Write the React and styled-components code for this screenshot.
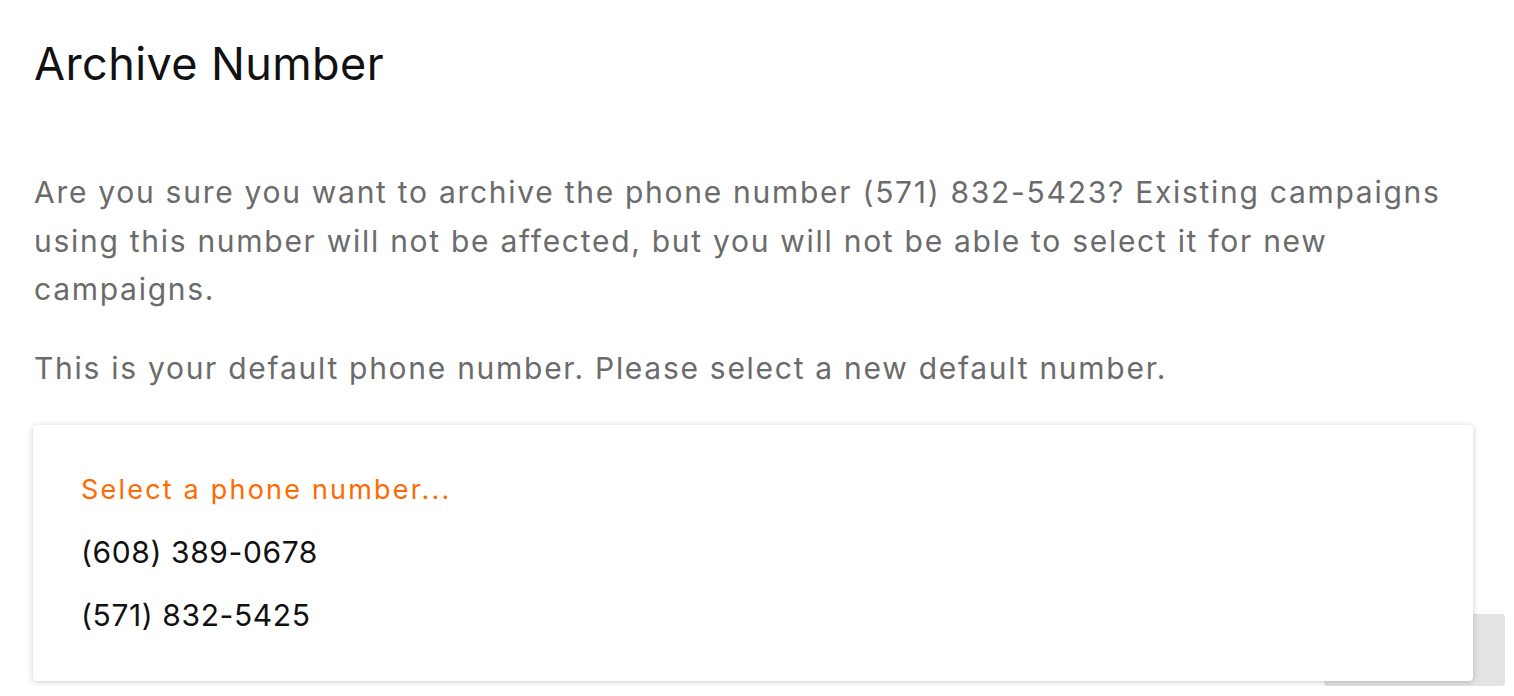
import React from 'react';
import styled, { createGlobalStyle } from 'styled-components';

const GlobalStyle = createGlobalStyle`
  html, body { margin: 0; padding: 0; background: #ffffff; }
  body { font-family: Inter, "Open Sans", sans-serif; }
`;

const Page = styled.div`
  padding: 37px 9px 0 34px;
  box-sizing: border-box;
  width: 1514px;
`;

const Title = styled.h2`
  margin: 0;
  max-width: 1440px;
  font-family: Inter, sans-serif;
  font-weight: 400;
  font-size: 45px;
  line-height: 54px;
  letter-spacing: 0.4px;
  color: #111111;
`;

const Text = styled.p`
  margin: ${p => p.$top}px 0 0;
  max-width: 1440px;
  font-family: Inter, sans-serif;
  font-size: 30px;
  line-height: 48.5px;
  letter-spacing: 1.72px;
  color: #6b6b6b;
`;

const Field = styled.div`
  position: relative;
  margin-top: 32.7px;
  max-width: 1440px;
  height: 56px;
`;

const Menu = styled.ul`
  position: absolute;
  z-index: 2;
  top: 0;
  left: -1px;
  width: 1440px;
  box-sizing: border-box;
  margin: 0;
  padding: 33px 48px 34px;
  list-style: none;
  background: #ffffff;
  border-radius: 4px;
  box-shadow: 0 1px 6px rgba(0, 0, 0, 0.2);
`;

const Option = styled.li`
  height: 63px;
  line-height: 63px;
  font-family: Inter, sans-serif;
  font-size: ${p => (p.$placeholder ? '27px' : '30px')};
  letter-spacing: ${p => (p.$placeholder ? '2.2px' : '0.6px')};
  color: ${p => (p.$placeholder ? '#ff6a00' : '#111111')};
  white-space: nowrap;
`;

const Footer = styled.div`
  display: flex;
  justify-content: flex-end;
  padding-top: 133px;
`;

const Button = styled.button`
  width: 181px;
  height: 72px;
  border: none;
  border-radius: 4px;
  background: #e3e3e3;
  color: #555555;
  font-family: Inter, sans-serif;
  font-size: 28px;
`;

const options = ['(608) 389-0678', '(571) 832-5425'];

export default function App() {
  return (
    <Page>
      <GlobalStyle />
      <Title>Archive Number</Title>
      <Text $top={77}>
        Are you sure you want to archive the phone number (571) 832-5423? Existing campaigns
        using this number will not be affected, but you will not be able to select it for new
        campaigns.
      </Text>
      <Text $top={30}>This is your default phone number. Please select a new default number.</Text>
      <Field>
        <Menu>
          <Option $placeholder>Select a phone number...</Option>
          {options.map(o => (
            <Option key={o}>{o}</Option>
          ))}
        </Menu>
      </Field>
      <Footer>
        <Button>Cancel</Button>
      </Footer>
    </Page>
  );
}
